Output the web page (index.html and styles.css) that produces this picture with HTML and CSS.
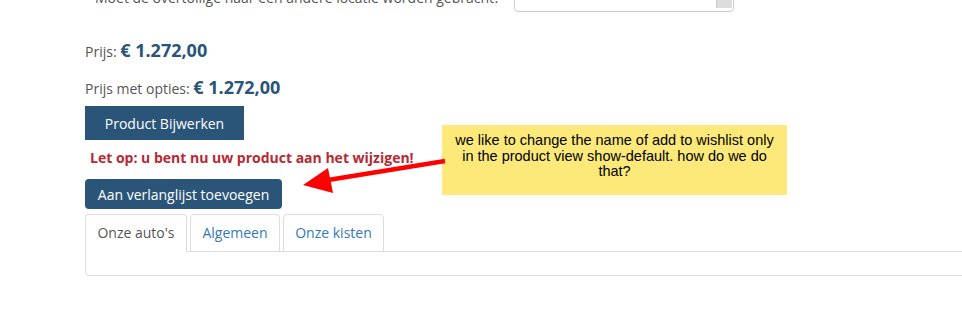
FILE: index.html
```html
<!DOCTYPE html>
<html lang="nl">

<head>
  <meta charset="UTF-8" />
  <meta name="viewport" content="width=device-width, initial-scale=1.0" />
  <title>Product bewerken</title>
  <link rel="stylesheet" href="styles.css">
</head>

<body>
  <div class="product">
    <div class="option-row">
      <label class="option-label">Moet de overtollige naar een andere locatie worden gebracht?</label>
      <div class="option-select"><span class="scroll"></span></div>
    </div>

    <p class="price">Prijs: <strong>€ 1.272,00</strong></p>
    <p class="price price-options">Prijs met opties: <strong>€ 1.272,00</strong></p>

    <button class="btn btn-update">Product Bijwerken</button>

    <p class="warning">Let op: u bent nu uw product aan het wijzigen!</p>

    <button class="btn btn-wishlist">Aan verlanglijst toevoegen</button>

    <div class="tabs">
      <ul class="tab-nav">
        <li class="active"><a href="#">Onze auto's</a></li>
        <li><a href="#">Algemeen</a></li>
        <li><a href="#">Onze kisten</a></li>
      </ul>
      <div class="tab-content"></div>
    </div>
  </div>

  <!-- annotation on the screenshot -->
  <div class="note">we like to change the name of add to wishlist only in the product view show-default. how do we do that?</div>
  <svg class="arrow" width="150" height="50" viewBox="0 0 150 50">
    <line x1="145" y1="11" x2="22" y2="31" stroke="#f00" stroke-width="4.5" />
    <polygon points="3,35 28,18 33,43" fill="#f00" />
  </svg>
</body>

</html>
```

FILE: styles.css
```css
* {
  box-sizing: border-box;
  margin: 0;
  padding: 0;
}

body {
  font-family: 'Open Sans', 'Noto Sans', Arial, sans-serif;
  font-size: 14px;
  color: #555;
  background: #fff;
  overflow: hidden;
  position: relative;
  height: 332px;
}

.product {
  padding-left: 85px;
}

.option-row {
  display: flex;
  align-items: flex-end;
  margin-top: -21px;
}

.option-label {
  width: 429px;
  padding-left: 10px;
  padding-bottom: 5px;
  white-space: nowrap;
}

.option-select {
  width: 220px;
  height: 33px;
  border: 1px solid #ccc;
  border-radius: 4px;
  display: flex;
  justify-content: flex-end;
}

.scroll {
  width: 16px;
  height: 28px;
  background: #ddd;
  border-left: 1px solid #ccc;
  margin-right: 1px;
}

.price {
  margin-top: 26px;
  line-height: 24px;
}

.price strong {
  font-size: 18px;
  font-weight: 700;
  color: #2a5579;
}

.price-options {
  margin-top: 11px;
}

.btn {
  display: block;
  border: none;
  background: #2a5579;
  color: #fff;
  font-family: inherit;
  font-size: 14px;
  cursor: pointer;
}

.btn-update {
  margin-top: 5px;
  width: 159px;
  height: 34px;
}

.warning {
  margin-top: 8px;
  padding-left: 5px;
  font-weight: 700;
  color: #b52a33;
  line-height: 20px;
}

.btn-wishlist {
  margin-top: 11px;
  width: 197px;
  height: 30px;
  border-radius: 4px;
}

.tabs {
  margin-top: 5px;
  width: 900px;
}

.tab-nav {
  list-style: none;
  display: flex;
  gap: 3px;
  margin-bottom: -1px;
  position: relative;
}

.tab-nav li a {
  display: block;
  height: 38px;
  line-height: 36px;
  text-align: center;
  border: 1px solid #ddd;
  border-radius: 4px 4px 0 0;
  color: #337ab7;
  text-decoration: none;
}

.tab-nav li:nth-child(1) a {
  width: 102px;
}

.tab-nav li:nth-child(2) a {
  width: 90px;
}

.tab-nav li:nth-child(3) a {
  width: 101px;
}

.tab-nav li.active a {
  color: #555;
  background: #fff;
  border-bottom-color: #fff;
}

.tab-content {
  height: 25px;
  border: 1px solid #ddd;
  border-radius: 0 0 4px 4px;
}

.note {
  position: absolute;
  left: 442px;
  top: 125px;
  width: 345px;
  height: 70px;
  padding: 8px 12px 0;
  background: #fde97a;
  color: #000;
  font-family: Arial, 'Liberation Sans', sans-serif;
  font-size: 14.5px;
  line-height: 15.5px;
  text-align: center;
}

.arrow {
  position: absolute;
  left: 300px;
  top: 150px;
}
```
